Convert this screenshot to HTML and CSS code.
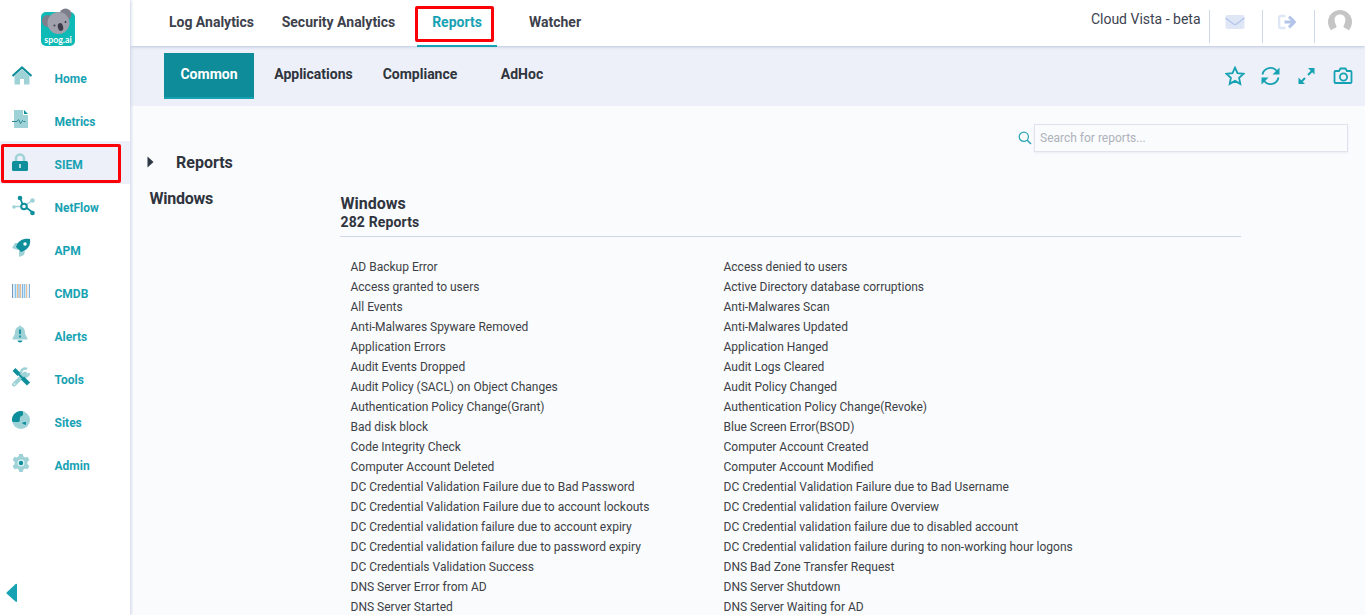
FILE: index.html
```html
<!DOCTYPE html>
<html lang="en">
<head>
<meta charset="utf-8">
<title>Reports</title>
<link rel="stylesheet" href="styles.css">
</head>
<body>
<aside class="sidebar">
  <svg class="logo" viewBox="0 0 34 39" width="34" height="39">
    <rect x="0" y="4" width="34" height="34" rx="5" fill="#0dbab5"/>
    <circle cx="7" cy="13" r="6" fill="#7d7e8b"/><circle cx="24.500" cy="6.500" r="6" fill="#7d7e8b"/>
    <ellipse cx="17.500" cy="15" rx="11" ry="11" fill="#a0a1ad"/>
    <circle cx="13.500" cy="17.500" r="1" fill="#3b3b4c"/><circle cx="24.500" cy="14" r="1" fill="#3b3b4c"/>
    <ellipse cx="19.500" cy="19" rx="2.600" ry="4" fill="#3b3b4c" transform="rotate(-15 19.500 19)"/>
    <text x="17" y="34.500" text-anchor="middle" class="logo-text">spog.ai</text>
  </svg>
  <nav class="side-nav">
    <a class="side-item"><svg width="22" height="22" viewBox="0 0 22 22"><path d="M2.500 11 10 4.500l7.500 6.500v8.500H12v-5.500H8v5.500H2.500z" fill="#9fd2d7"/><path d="M.5 11 10 2.500l9.500 8.500" fill="none" stroke="#0f8f9c" stroke-width="2.200"/></svg><span>Home</span></a>
    <a class="side-item"><svg width="22" height="22" viewBox="0 0 22 22"><path d="M2 2h9v5h5v13H2z" fill="#9fd2d7"/><path d="M12 2l4 4h-4z" fill="#0f8f9c"/><path d="M0 13.500h5l1.500-2 2 4 2-3 1 1h2" fill="none" stroke="#2b8993"/></svg><span>Metrics</span></a>
    <a class="side-item active"><svg width="22" height="22" viewBox="0 0 22 22"><path d="M4 11V7.500a4 4 0 0 1 8 0v4" fill="none" stroke="#9fd2d7" stroke-width="2.500"/><rect y="10" width="16" height="10" rx="1.500" fill="#0f8f9c"/><path d="M8 13v4" stroke="#d4eef1" stroke-width="1.600"/></svg><span>SIEM</span></a>
    <a class="side-item"><svg width="24" height="22" viewBox="0 0 24 22"><path d="M2 12.500h10l8-6" fill="none" stroke="#9fd2d7" stroke-width="1.300"/><path d="m8 4 3 7 9 7" fill="none" stroke="#0f8f9c" stroke-width="1.800"/><circle cx="12" cy="12.500" r="2.800" fill="#fff" stroke="#0f8f9c" stroke-width="2"/><circle cx="8" cy="4" r="2.300" fill="#0f8f9c"/><circle cx="20.500" cy="19" r="2.300" fill="#0f8f9c"/><circle cx="2" cy="13" r="1.800" fill="#9fd2d7"/><circle cx="20.500" cy="6.500" r="2.300" fill="#9fd2d7"/></svg><span>NetFlow</span></a>
    <a class="side-item"><svg width="22" height="22" viewBox="0 0 22 22"><path d="M8 6H3L0 11l6 2zM13 14l-1 4-5 2 0-6z" fill="#9fd2d7"/><path d="M18 2c1 6-2 11-9 13l-5-5C6 3 12 1 18 2z" fill="#0f8f9c"/><circle cx="13" cy="7" r="1.700" fill="#fff"/></svg><span>APM</span></a>
    <a class="side-item"><svg width="22" height="22" viewBox="0 0 22 22"><path d="M0 4h18v14H0z" fill="#e3f0f8"/><path d="M.5 4v14" stroke="#7798b8"/><path d="M3.500 4v14M12.500 4v14" stroke="#89c3ec" stroke-width="1.400"/><path d="M5.500 4v14M8.500 4v14M14.500 4v14" stroke="#e8bd91"/><path d="M7 4v14M10.500 4v14M17.500 4v14" stroke="#86b2d9"/></svg><span>CMDB</span></a>
    <a class="side-item"><svg width="22" height="22" viewBox="0 0 22 22"><path d="M8 2 9 3.500c3 1 4 3 4 7l2.500 5v1H.5v-1L3 10.500c0-4 1-6 4-7z" fill="#9fd2d7"/><path d="M8 6.500V11M8 12.500v2" stroke="#0f8f9c" stroke-width="1.800"/><path d="M5.500 17.500h5c-.5 2.500-4.500 2.500-5 0z" fill="#0f8f9c"/></svg><span>Alerts</span></a>
    <a class="side-item"><svg width="22" height="22" viewBox="0 0 22 22"><path d="m2 18.500 11-11" stroke="#9fd2d7" stroke-width="4" stroke-linecap="round"/><path d="M15 3a4 4 0 1 0 2 4" fill="none" stroke="#9fd2d7" stroke-width="2.600"/><circle cx="2.500" cy="18" r=".8" fill="#fff"/><path d="m2 3.500 5 5" stroke="#0f8f9c" stroke-width="4"/><path d="m6 7.500 6 6" stroke="#0f8f9c" stroke-width="1.800"/><path d="m10.500 12 6 6" stroke="#0f8f9c" stroke-width="4.400"/></svg><span>Tools</span></a>
    <a class="side-item"><svg width="22" height="22" viewBox="0 0 22 22"><circle cx="9" cy="11" r="9" fill="#9fd2d7"/><path d="M0 12A9 9 0 0 1 11 2.300V6L8 8v2l-2 2v1H1zM6 10l2 1-1 2-2-.5zM10 14l2-1h2v3l-3-1z" fill="#0f8f9c"/></svg><span>Sites</span></a>
    <a class="side-item"><svg width="22" height="22" viewBox="0 0 22 22"><path d="M7.200 2 6.600 4.500 4.800 5.500 2.500 4.700.6 8l2 1.800v2.400L.6 14l1.900 3.300 2.300-.8 1.800 1 .6 2.500h3.600l.6-2.500 1.800-1 2.300.8 1.900-3.300-2-1.800V9.800l2-1.800-1.900-3.300-2.300.8-1.800-1L10.800 2z" fill="#9fd2d7"/><circle cx="9" cy="11" r="3.500" fill="#e0f3f5"/><circle cx="9" cy="11" r="2.200" fill="#0f8f9c"/></svg><span>Admin</span></a>
  </nav>
  <svg class="collapse" width="12" height="20" viewBox="0 0 12 20"><path d="M.8 9.200 9.500 1.200q1.500-1 1.500.8v16q0 1.800-1.500.6L.8 10.800q-.8-.8 0-1.600z" fill="#17a2b3"/></svg>
  <div class="mark mark-siem"></div>
</aside>
<main class="page">
  <header class="topbar">
    <nav class="tabs"><a>Log Analytics</a><a>Security Analytics</a><a class="selected">Reports</a><a>Watcher</a></nav>
    <div class="account">
      <span class="tenant">Cloud Vista - beta</span>
      <span class="cell"><svg width="20" height="16" viewBox="0 0 20 16"><rect x=".5" y="1" width="19" height="14" rx="2" fill="#dfe7f6"/><path d="m.5 4 8 6q1.500 1 3 0l8-6" fill="none" stroke="#b5c5ea" stroke-width="1.500"/></svg></span>
      <span class="cell"><svg width="20" height="16" viewBox="0 0 20 16"><path d="M7.500 2H3Q1 2 1 4v8q0 2 2 2h4.500" fill="none" stroke="#dfe7f6" stroke-width="2.600"/><path d="M6.500 8H17m-6-5.300L16.500 8 11 13.300" fill="none" stroke="#b3c4ea" stroke-width="3" stroke-linejoin="round"/></svg></span>
      <span class="cell avatar"><svg width="24" height="24" viewBox="0 0 24 24"><circle cx="12" cy="12" r="12" fill="#c5c5c5"/><path d="M12 4.500c4 0 5.700 3 5.300 6.500-.3 3-1.600 3.700-1.800 5.500 0 2 5.500 2 6 5.500V25h-19v-3c.5-3.500 6-3.500 6-5.500-.2-1.800-1.500-2.500-1.800-5.500C6.300 7.500 8 4.500 12 4.500z" fill="#fff"/></svg></span>
    </div>
    <div class="mark mark-reports"></div>
  </header>
  <div class="subbar">
    <nav class="subtabs"><a class="current">Common</a><a>Applications</a><a>Compliance</a><a>AdHoc</a></nav>
    <div class="actions">
      <svg width="20" height="20" viewBox="0 0 20 20"><path d="m10 1.600 2.500 5.500 6 .7-4.400 4.100 1.200 6-5.300-3-5.300 3 1.200-6L1.500 7.800l6-.7z"/></svg>
      <svg width="20" height="20" viewBox="0 0 20 20"><path d="M1.500 8.500A8 8 0 0 1 16 5.500M17.500 11.500A8 8 0 0 1 3 14.500"/><path class="solid" d="M18.500 1.500v7h-7zM.5 18.500v-7h7z"/></svg>
      <svg width="20" height="20" viewBox="0 0 20 20"><path d="m3 17 5-5m3-3 5-5" stroke-width="2"/><path class="solid" d="M11 2h6.500v6.500zM1.500 11.500V18H8z"/></svg>
      <svg width="20" height="20" viewBox="0 0 20 20"><path d="M2.500 5H6l1.500-2.500h5L14 5h3.500q1 0 1 1v10q0 1-1 1h-15q-1 0-1-1V6q0-1 1-1z"/><circle cx="10.500" cy="11" r="3.600"/></svg>
    </div>
  </div>
  <section class="content">
    <div class="search"><svg width="14" height="14" viewBox="0 0 14 14"><circle cx="5.800" cy="5.800" r="4.600" fill="none" stroke="#30a5b9" stroke-width="1.300"/><path d="m9 9 4 4" stroke="#30a5b9" stroke-width="1.600"/></svg><input class="search-input" type="text" placeholder="Search for reports..."></div>
    <div class="columns">
      <div class="tree">
        <div class="tree-head"><svg width="7" height="12" viewBox="0 0 7 12"><path d="M.5.500 6.500 6l-6 5.500z" fill="#2d3644"/></svg><h2>Reports</h2></div>
        <h2 class="group">Windows</h2>
      </div>
      <div class="reports">
        <h2>Windows</h2>
        <h3>282 Reports</h3>
        <div class="grid">
          <a>AD Backup Error</a><a>Access denied to users</a>
          <a>Access granted to users</a><a>Active Directory database corruptions</a>
          <a>All Events</a><a>Anti-Malwares Scan</a>
          <a>Anti-Malwares Spyware Removed</a><a>Anti-Malwares Updated</a>
          <a>Application Errors</a><a>Application Hanged</a>
          <a>Audit Events Dropped</a><a>Audit Logs Cleared</a>
          <a>Audit Policy (SACL) on Object Changes</a><a>Audit Policy Changed</a>
          <a>Authentication Policy Change(Grant)</a><a>Authentication Policy Change(Revoke)</a>
          <a>Bad disk block</a><a>Blue Screen Error(BSOD)</a>
          <a>Code Integrity Check</a><a>Computer Account Created</a>
          <a>Computer Account Deleted</a><a>Computer Account Modified</a>
          <a>DC Credential Validation Failure due to Bad Password</a><a>DC Credential Validation Failure due to Bad Username</a>
          <a>DC Credential Validation Failure due to account lockouts</a><a>DC Credential validation failure Overview</a>
          <a>DC Credential validation failure due to account expiry</a><a>DC Credential validation failure due to disabled account</a>
          <a>DC Credential validation failure due to password expiry</a><a>DC Credential validation failure during to non-working hour logons</a>
          <a>DC Credentials Validation Success</a><a>DNS Bad Zone Transfer Request</a>
          <a>DNS Server Error from AD</a><a>DNS Server Shutdown</a>
          <a>DNS Server Started</a><a>DNS Server Waiting for AD</a>
        </div>
      </div>
    </div>
  </section>
</main>
</body>
</html>
```
FILE: styles.css
```css
* { box-sizing: border-box; }
body { margin: 0; height: 615px; display: flex; overflow: hidden; background: #fafbfd; color: #2f343d; font-family: Roboto, sans-serif; font-size: 12px; }
h2, h3 { margin: 0; font-weight: 700; }
svg { flex: none; display: block; }
.sidebar { position: relative; z-index: 2; flex: 0 0 130px; height: 615px; display: flex; flex-direction: column; background: #fff; box-shadow: 1px 0 3px #c9d1e5; padding-top: 8px; }
.logo { margin-left: 41px; }
.logo-text { font: 700 8.800px Lato, sans-serif; fill: #fff; }
.side-nav { margin-top: 8px; }
.side-item { height: 43px; display: grid; grid-template-columns: 42.500px 1fr; align-items: center; padding-left: 12px; color: #17a2b3; font-weight: 700; }
.side-item svg { margin-top: -1px; }
.side-item span { padding-top: 4px; }
.side-item.active { background: #edf0f8; }
.collapse { margin: auto 0 12px 6px; }
.mark { position: absolute; border: 3px solid #fb0007; border-radius: 2px; }
.mark-siem { left: 1px; top: 144px; width: 120px; height: 39px; }
.mark-reports { left: 285px; top: 6px; width: 79px; height: 36px; }
.page { flex: 1; min-width: 0; }
.topbar { position: relative; z-index: 1; height: 46px; display: flex; justify-content: space-between; background: #fff; box-shadow: 0 1px 3px #bcc6dc; }
.tabs { display: grid; grid-template-columns: 113px 149px 80px 116px; margin-left: 25px; height: 47px; font-size: 14px; font-weight: 700; text-align: center; line-height: 44px; }
.tabs a { color: #3d414c; }
.tabs a:nth-child(2) { padding-right: 8px; }
.tabs a.selected { color: #17a2b3; border-bottom: 2px solid #17a2b3; }
.account { display: flex; }
.tenant { font-size: 14px; line-height: 38px; margin-right: 8.500px; color: #3d4350; }
.cell { width: 52.500px; height: 33px; margin-top: 10px; border-left: 1px solid #ccd7e7; padding: 4px 0 0 15px; }
.cell.avatar { width: 51px; padding: 0 0 0 13px; }
.subbar { height: 60px; display: flex; justify-content: space-between; background: #edf0f8; }
.subtabs { display: grid; grid-template-columns: 90px 119px 94px 110px; height: 46px; margin: 7px 0 0 34px; font-size: 14px; font-weight: 700; line-height: 43px; text-align: center; }
.subtabs .current { background: #0e8c99; color: #fff; border-bottom: 2px solid #17a2b3; }
.actions { display: flex; gap: 16px; padding: 20px 12px 0 0; }
.actions svg { fill: none; stroke: #17a2b3; stroke-width: 1.800; }
.actions .solid { fill: #17a2b3; stroke: none; }
.search { height: 46px; padding: 18px 17px 0 0; display: flex; justify-content: flex-end; gap: 2px; }
.search svg { margin-top: 7px; }
.search-input { width: 314px; height: 28px; border: 1px solid #dfe3ee; background: transparent; padding: 0 5px; font: 12px Roboto, sans-serif; box-shadow: 0 1px 2px #e9ecf4; }
.search-input::placeholder { color: #aeb2ba; }
.columns { display: grid; grid-template-columns: 190px 901px; padding-left: 20px; }
.tree { padding-top: 1px; }
.tree h2, .reports h2 { font-size: 16px; line-height: 20px; }
.tree .group { letter-spacing: -.25px; margin-left: -.5px; }
.tree-head { display: flex; align-items: center; gap: 22px; margin: 0 0 16px -3px; }
.tree-head svg { margin-top: -2px; }
.reports { padding-top: 42px; }
.reports h2 { padding-left: .5px; }
.reports h3 { font-size: 14px; line-height: 17px; height: 23px; border-bottom: 1px solid #cdd7e9; margin-bottom: 20px; padding-left: .5px; letter-spacing: .15px; }
.grid { display: grid; grid-template-columns: 373px 1fr; grid-auto-rows: 20px; line-height: 20px; padding-left: 10.500px; white-space: nowrap; color: #3c3f46; }
```
